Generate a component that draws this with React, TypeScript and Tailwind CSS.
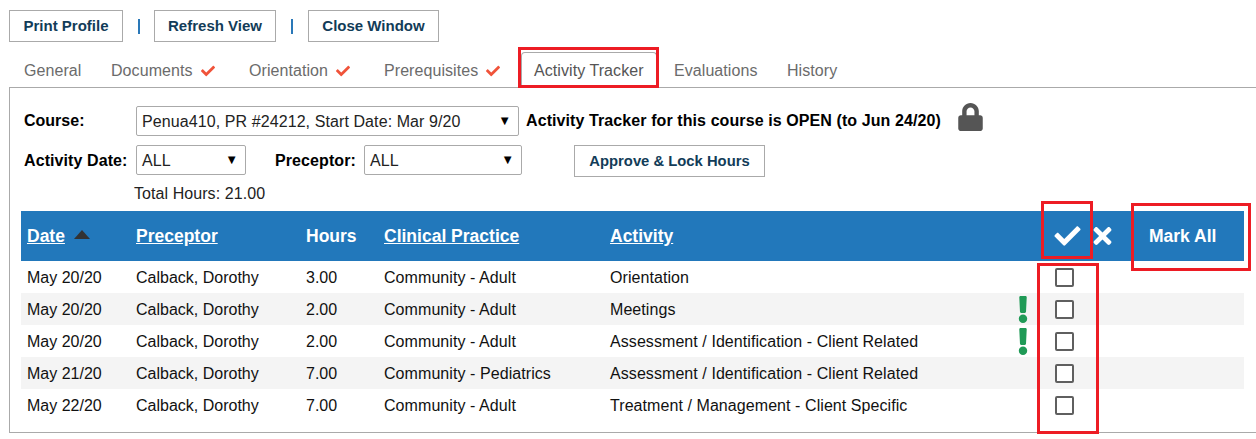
import { FaCheck, FaTimes, FaLock, FaExclamation } from 'react-icons/fa'

const rows = [
  { date: 'May 20/20', hours: '3.00', practice: 'Community - Adult', activity: 'Orientation', flag: false },
  { date: 'May 20/20', hours: '2.00', practice: 'Community - Adult', activity: 'Meetings', flag: true },
  { date: 'May 20/20', hours: '2.00', practice: 'Community - Adult', activity: 'Assessment / Identification - Client Related', flag: true },
  { date: 'May 21/20', hours: '7.00', practice: 'Community - Pediatrics', activity: 'Assessment / Identification - Client Related', flag: false },
  { date: 'May 22/20', hours: '7.00', practice: 'Community - Adult', activity: 'Treatment / Management - Client Specific', flag: false },
]

const TopButton = ({ label, width }: { label: string; width: string }) => (
  <button className={`h-8 ${width} border border-[#aaaaaa] bg-white text-center text-[15px] font-bold text-[#123c58]`}>{label}</button>
)

const Tab = ({ label, checked, className }: { label: string; checked?: boolean; className: string }) => (
  <div className={`flex items-center pt-[2px] tracking-[0.07px] text-[#6b6b6b] ${className}`}>
    {label}
    {checked && <FaCheck className="ml-2 h-[14px] w-[14px] text-[#f0533a]" />}
  </div>
)

const Select = ({ value, width }: { value: string; width: string }) => (
  <div className={`flex h-[30px] items-center justify-between rounded-[2px] border border-[#aaaaaa] bg-white pl-[5px] pr-[7px] text-[#222222] ${width}`}>
    <span className="pt-[1px] tracking-[0.09px]">{value}</span>
    <span className="text-[13px] text-black">▼</span>
  </div>
)

export default function App() {
  return (
    <div className="relative h-[439px] w-[1256px] overflow-hidden bg-white pt-[10px] text-[16px] text-[#111111] [font-family:'Liberation_Sans',Arial,sans-serif]">
      {/* Top buttons */}
      <div className="flex items-center pl-[9px]">
        <TopButton label="Print Profile" width="w-[114px]" />
        <span className="flex w-[31px] justify-center"><span className="h-[15px] w-[2px] bg-[#2a78b8]" /></span>
        <TopButton label="Refresh View" width="w-[122px]" />
        <span className="flex w-[32px] justify-center"><span className="h-[15px] w-[2px] bg-[#2a78b8]" /></span>
        <TopButton label="Close Window" width="w-[131px]" />
      </div>

      {/* Tabs */}
      <div className="mt-[10px] flex h-[35px] items-center pl-[24px]">
        <Tab label="General" className="w-[87px]" />
        <Tab label="Documents" checked className="w-[138px]" />
        <Tab label="Orientation" checked className="w-[135px]" />
        <Tab label="Prerequisites" checked className="w-[137px]" />
        <div className="flex h-[35px] w-[153px] items-center pl-[13px] pt-[2px] tracking-[0.07px] text-[#555555]">
          <div className="absolute left-[521px] top-[52px] h-[36px] w-[136px] rounded-t-[4px] border border-b-0 border-[#aaaaaa] bg-white" />
          <span className="relative">Activity Tracker</span>
        </div>
        <Tab label="Evaluations" className="w-[113px]" />
        <Tab label="History" className="w-[80px]" />
      </div>

      {/* Panel */}
      <div className="ml-[9px] h-[346px] w-[1247px] border-l border-t border-b border-[#aaaaaa] pl-[10px] pt-[18px]">
        <div className="flex h-[30px] items-center pl-[4px]">
          <span className="w-[112px] font-bold text-black">Course:</span>
          <Select value="Penua410, PR #24212, Start Date: Mar 9/20" width="w-[383px]" />
          <span className="ml-[7px] font-bold tracking-[0.09px] text-black">Activity Tracker for this course is OPEN (to Jun 24/20)</span>
          <FaLock className="ml-[17px] -mt-[8px] h-[28px] w-[25px] text-[#555555]" />
        </div>
        <div className="mt-[9px] flex h-[32px] items-start pl-[4px]">
          <span className="flex h-[30px] w-[112px] items-center pt-[1px] font-bold tracking-[0.09px] text-black">Activity Date:</span>
          <Select value="ALL" width="w-[110px]" />
          <span className="ml-[29px] flex h-[30px] w-[89px] items-center pt-[1px] font-bold tracking-[0.09px] text-black">Preceptor:</span>
          <Select value="ALL" width="w-[158px]" />
          <button className="ml-[52px] h-[32px] w-[191px] border border-[#aaaaaa] bg-white text-[14.8px] font-bold text-[#123c58]">Approve &amp; Lock Hours</button>
        </div>
        <div className="mt-[6px] h-[21px] pl-[114px] leading-[21px] tracking-[0.07px] text-[#222222]">Total Hours: 21.00</div>

        {/* Activity table */}
        <table className="ml-[1px] mt-[7px] w-[1223px] table-fixed border-collapse">
          <colgroup>
            <col className="w-[109px]" />
            <col className="w-[170px]" />
            <col className="w-[78px]" />
            <col className="w-[226px]" />
            <col className="w-[406px]" />
            <col className="w-[26px]" />
            <col className="w-[56px]" />
            <col className="w-[152px]" />
          </colgroup>
          <thead>
            <tr className="h-[50px] bg-[#2278bb] text-left text-[17.5px] font-bold text-white">
              <th className="pl-[6px] font-bold">
                <span className="underline">Date</span>
                <span className="ml-[9px] inline-block border-x-[8px] border-b-[9px] border-x-transparent border-b-[#333333] align-[3px]" />
              </th>
              <th className="pl-[6px] font-bold underline">Preceptor</th>
              <th className="pl-[6px] font-bold">Hours</th>
              <th className="pl-[6px] font-bold underline">Clinical Practice</th>
              <th className="pl-[6px] font-bold underline">Activity</th>
              <th />
              <th className="pl-[17px]">
                <FaCheck className="h-[26px] w-[29px] text-white" />
              </th>
              <th>
                <div className="flex items-center">
                  <FaTimes className="h-[26px] w-[21px] text-white" />
                  <span className="ml-[36px] font-bold">Mark All</span>
                </div>
              </th>
            </tr>
          </thead>
          <tbody>
            {rows.map((row, i) => (
              <tr key={i} className={`h-[32px] ${i % 2 === 1 ? 'bg-[#f4f4f4]' : 'bg-white'}`}>
                <td className="pl-[6px] pt-[2px]">{row.date}</td>
                <td className="pl-[6px] pt-[2px]">Calback, Dorothy</td>
                <td className="pl-[6px] pt-[2px]">{row.hours}</td>
                <td className="pl-[6px] pt-[2px] tracking-[0.07px]">{row.practice}</td>
                <td className="pl-[6px] pt-[2px] tracking-[0.07px]">{row.activity}</td>
                <td className="pl-[7px]">
                  {row.flag && <FaExclamation className="h-[27px] w-[12px] text-[#1f9a56]" />}
                </td>
                <td className="pl-[19px]">
                  <div className="h-[19px] w-[19px] rounded-[2px] border-2 border-[#5f5f5f] bg-white" />
                </td>
                <td />
              </tr>
            ))}
          </tbody>
        </table>
      </div>

      {/* Red highlight boxes drawn over the screenshot */}
      <div className="absolute left-[518px] top-[47px] h-[41px] w-[141px] border-[3px] border-[#ed1c24]" />
      <div className="absolute left-[1041px] top-[201px] h-[58px] w-[52px] border-[3px] border-[#ed1c24]" />
      <div className="absolute left-[1131px] top-[203px] h-[68px] w-[120px] border-[3px] border-[#ed1c24]" />
      <div className="absolute left-[1037px] top-[263px] h-[171px] w-[62px] border-[3px] border-[#ed1c24]" />
    </div>
  )
}
